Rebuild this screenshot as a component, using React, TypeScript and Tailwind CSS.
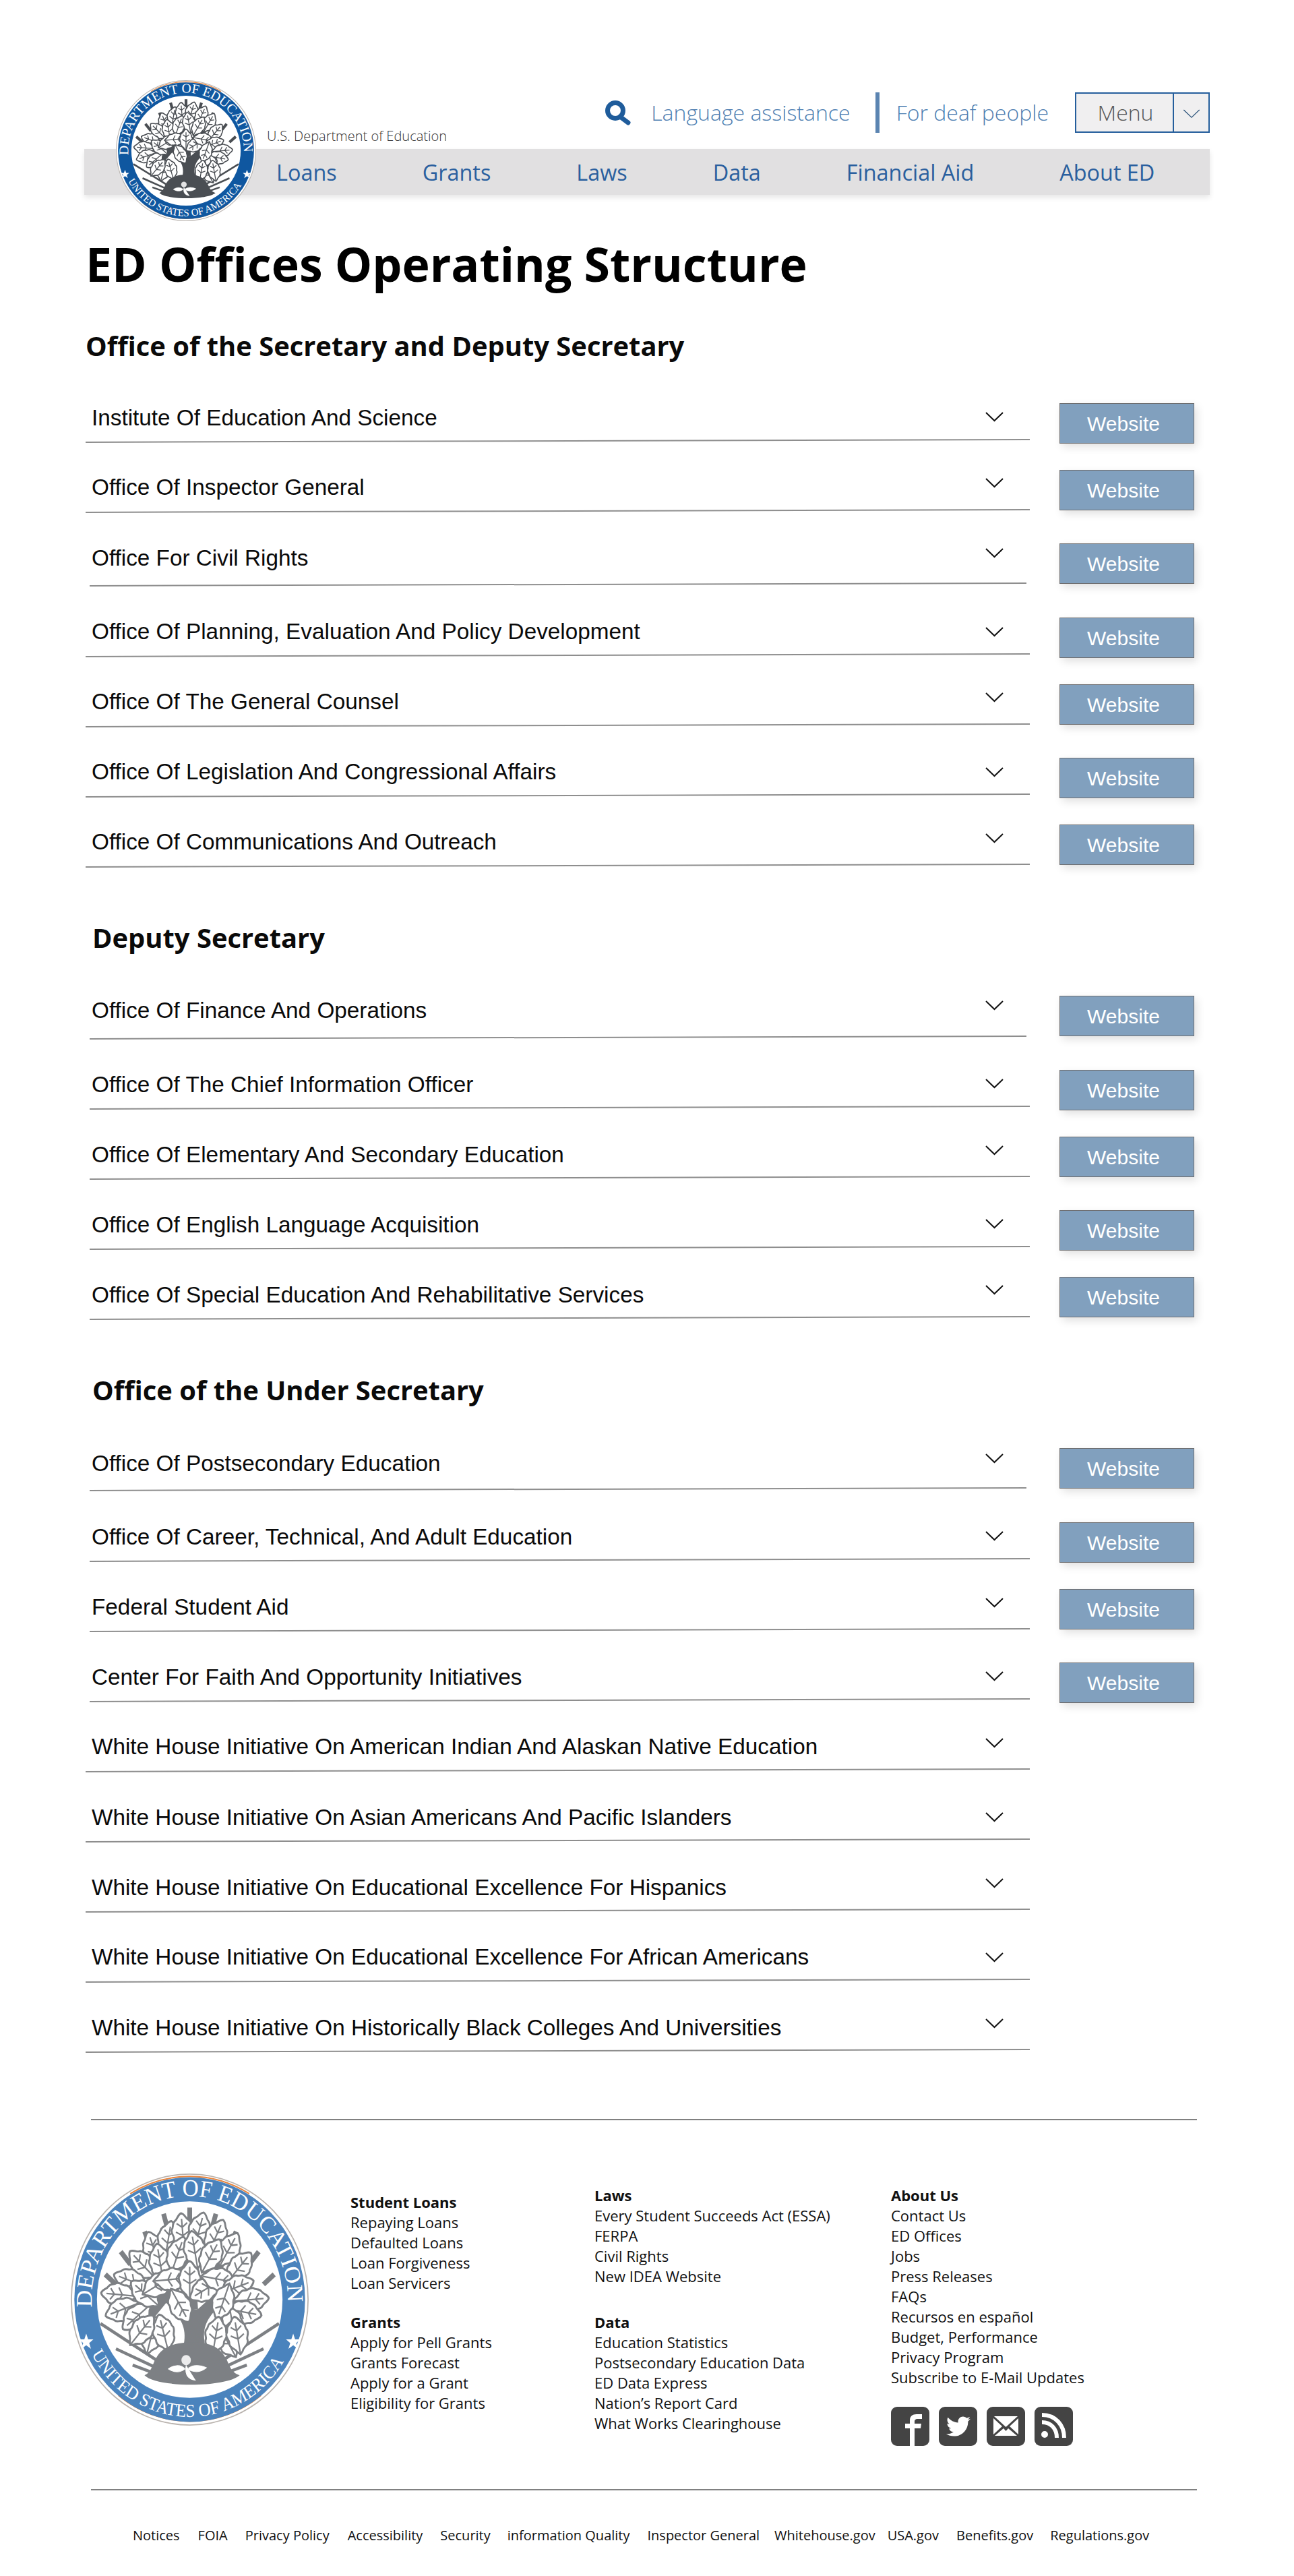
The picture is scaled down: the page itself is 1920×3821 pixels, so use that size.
import { FaTwitter } from "react-icons/fa";

const chevOffset: Record<number, string> = {
  32: "mb-[24px]",
  33: "mb-[25px]",
  38: "mb-[30px]",
  39: "mb-[31px]",
  43: "mb-[35px]",
  44: "mb-[36px]",
  45: "mb-[37px]",
};

const textOffset: Record<number, string> = {
  33: "mb-[13px]",
  34: "mb-[14px]",
  37: "mb-[17px]",
  38: "mb-[18px]",
  39: "mb-[19px]",
};

const btnOffset: Record<number, string> = {
  0: "mb-px",
  1: "mb-0",
  6: "-mb-[5px]",
};

const rowHeight: Record<number, string> = {
  104: "h-[104px]",
  105: "h-[105px]",
  109: "h-[109px]",
  112: "h-[112px]",
  118: "h-[118px]",
  119: "h-[119px]",
};

type Row = {
  name: string;
  h: number;
  text: number;
  chev: number;
  btn?: number;
  inset?: boolean;
  short?: boolean;
};

const secretary: Row[] = [
  { name: "Institute Of Education And Science", h: 112, text: 33, chev: 33, btn: 6 },
  { name: "Office Of Inspector General", h: 104, text: 34, chev: 39, btn: 1 },
  { name: "Office For Civil Rights", h: 109, text: 38, chev: 44, btn: 1, inset: true, short: true },
  { name: "Office Of Planning, Evaluation And Policy Development", h: 105, text: 34, chev: 32, btn: 6 },
  { name: "Office Of The General Counsel", h: 104, text: 34, chev: 39, btn: 1 },
  { name: "Office Of Legislation And Congressional Affairs", h: 104, text: 34, chev: 32, btn: 6 },
  { name: "Office Of Communications And Outreach", h: 104, text: 34, chev: 38, btn: 1 },
];

const deputy: Row[] = [
  { name: "Office Of Finance And Operations", h: 119, text: 39, chev: 45, btn: 0, inset: true, short: true },
  { name: "Office Of The Chief Information Officer", h: 104, text: 33, chev: 33, btn: 6, inset: true },
  { name: "Office Of Elementary And Secondary Education", h: 104, text: 33, chev: 38, btn: 1, inset: true },
  { name: "Office Of English Language Acquisition", h: 104, text: 33, chev: 33, btn: 6, inset: true },
  { name: "Office Of Special Education And Rehabilitative Services", h: 104, text: 33, chev: 39, btn: 1, inset: true },
];

const under: Row[] = [
  { name: "Office Of Postsecondary Education", h: 118, text: 37, chev: 43, btn: 1, inset: true, short: true },
  { name: "Office Of Career, Technical, And Adult Education", h: 105, text: 33, chev: 33, btn: 6, inset: true },
  { name: "Federal Student Aid", h: 104, text: 33, chev: 38, btn: 1, inset: true },
  { name: "Center For Faith And Opportunity Initiatives", h: 104, text: 33, chev: 33, btn: 6, inset: true },
  { name: "White House Initiative On American Indian And Alaskan Native Education", h: 104, text: 34, chev: 38 },
  { name: "White House Initiative On Asian Americans And Pacific Islanders", h: 104, text: 33, chev: 32 },
  { name: "White House Initiative On Educational Excellence For Hispanics", h: 104, text: 33, chev: 38 },
  { name: "White House Initiative On Educational Excellence For African Americans", h: 104, text: 34, chev: 32 },
  { name: "White House Initiative On Historically Black Colleges And Universities", h: 104, text: 33, chev: 38 },
];

const navItems = ["Loans", "Grants", "Laws", "Data", "Financial Aid", "About ED"];

const bottomLinks = [
  { label: "Notices", cls: "mr-[27px]" },
  { label: "FOIA", cls: "mr-[26px]" },
  { label: "Privacy Policy", cls: "mr-[27px]" },
  { label: "Accessibility", cls: "mr-[26px]" },
  { label: "Security", cls: "mr-[25px]" },
  { label: "information Quality", cls: "mr-[26px]" },
  { label: "Inspector General", cls: "mr-[22px]" },
  { label: "Whitehouse.gov", cls: "mr-[18px]" },
  { label: "USA.gov", cls: "mr-[26px]" },
  { label: "Benefits.gov", cls: "mr-[25px]" },
  { label: "Regulations.gov", cls: "" },
];

// leaf positions for the seal: x, y, rotation
const leaves: [number, number, number][] = [
  [70, 60, -20], [82, 52, 10], [94, 46, -5], [108, 45, 15], [122, 50, 25], [133, 60, 30],
  [60, 72, -45], [75, 70, -10], [90, 64, 20], [104, 60, -10], [118, 65, 30], [142, 74, 40],
  [50, 85, -70], [40, 96, -85], [43, 108, -110], [55, 114, -130], [62, 95, -50], [74, 88, 60], [85, 84, 85],
  [100, 84, 0], [113, 92, -120], [92, 105, 150],
  [125, 84, 100], [140, 90, 70], [152, 100, 85], [146, 110, 100], [136, 120, 170], [128, 102, -160],
  [68, 128, 15], [78, 126, -15], [60, 124, 40], [131, 132, -30], [122, 128, 10], [140, 128, -10],
];

const topRays = [
  [62, 46, 68, 60], [78, 32, 82, 46], [100, 27, 100, 40], [122, 32, 118, 46], [139, 46, 133, 60],
  [158, 62, 150, 72], [42, 62, 50, 72], [29, 80, 38, 88], [171, 80, 162, 88],
];

const lowRays = [
  [25, 119, 72, 148], [38, 139, 74, 155], [52, 152, 72, 159],
  [175, 119, 128, 148], [162, 139, 126, 155], [148, 152, 128, 159],
];

function Seal({ ring, tree, cls }: { ring: string; tree: string; cls: string }) {
  return (
    <svg viewBox="0 0 200 200" preserveAspectRatio="none" className={cls}>
      <defs>
        <path id="seal-top" d="M 17.8 106 A 82.4 82.4 0 1 1 182.2 106" />
        <path id="seal-bottom" d="M 17.5 143 A 93 93 0 0 0 182.5 143" />
      </defs>
      <circle cx="100" cy="100" r="99.5" fill="#fff" stroke="#b9b3ae" strokeWidth="1" />
      <path d="M 40 176 A 98 98 0 0 0 160 176" fill="none" stroke="#e8833a" strokeWidth="1" />
      <path d="M 50 16 A 98 98 0 0 1 150 16" fill="none" stroke="#e8833a" strokeWidth="1" />
      <circle cx="100" cy="100" r="97" fill={ring} />
      <circle cx="100" cy="100" r="78" fill="#fff" />
      <text fill="#fff" fontFamily="'Liberation Serif', serif" fontSize="19">
        <textPath href="#seal-top" textLength="266" lengthAdjust="spacingAndGlyphs">
          DEPARTMENT OF EDUCATION
        </textPath>
      </text>
      <text fill="#fff" fontFamily="'Liberation Serif', serif" fontSize="14.5">
        <textPath href="#seal-bottom" textLength="196" lengthAdjust="spacingAndGlyphs">
          UNITED STATES OF AMERICA
        </textPath>
      </text>
      <polygon points="13,127 14.6,131.5 19,131.5 15.5,134.5 17,139 13,136.2 9,139 10.5,134.5 7,131.5 11.4,131.5" fill="#fff" />
      <polygon points="187,127 188.6,131.5 193,131.5 189.5,134.5 191,139 187,136.2 183,139 184.5,134.5 181,131.5 185.4,131.5" fill="#fff" />
      {topRays.map(([a, b, c, d], i) => (
        <line key={i} x1={a} y1={b} x2={c} y2={d} stroke={tree} strokeWidth="4" />
      ))}
      {lowRays.map(([a, b, c, d], i) => (
        <line key={i} x1={a} y1={b} x2={c} y2={d} stroke={tree} strokeWidth="2.4" />
      ))}
      <path d="M103 140 L103 112 M103 118 L70 88 M103 116 L134 90 M103 108 L100 66 M70 88 L45 98 M134 90 L150 104 M88 96 L76 62 M116 100 L128 62 M84 92 L60 120 M122 98 L136 128" stroke={tree} strokeWidth="8" fill="none" />
      <path d="M94 140 C98 126 95 118 86 108 L122 108 C112 118 110 126 114 140 Z" fill={tree} />
      {leaves.map(([x, y, r], i) => (
        <g key={i} transform={`translate(${x} ${y}) rotate(${r}) scale(1.12)`}>
          <path
            d="M0 -13 C3 -12 3 -9 5 -8 C8 -6 6 -4 8 -2 C9 1 6 3 7 5 C7 9 3 9 2 12 L0 14 L-2 12 C-3 9 -7 9 -7 5 C-6 3 -9 1 -8 -2 C-6 -4 -8 -6 -5 -8 C-3 -9 -3 -12 0 -13 Z"
            fill="#fff"
            stroke={tree}
            strokeWidth="1.4"
          />
          <path d="M0 -9 L0 13 M0 -3 L-4 -6 M0 -3 L4 -6 M0 3 L-5 0 M0 3 L5 0" stroke={tree} strokeWidth="1.1" fill="none" />
        </g>
      ))}
      <path d="M62 160 C68 158 69 150 72 146 C78 136 90 134 102 134 C114 134 124 136 130 146 C133 150 134 158 142 160 C130 170 72 170 62 160 Z" fill={tree} />
      <circle cx="97" cy="148" r="4" fill="#fff" opacity="0.85" />
      <path d="M97 152 C96 158 97 163 105 164 M96 155 C92 151 86 152 82 155 C87 158 92 158 96 155 Z M98 155 C103 151 109 152 114 154 C109 158 103 158 98 155 Z" fill="#fff" stroke="#fff" strokeWidth="0.6" />
    </svg>
  );
}

function SearchIcon() {
  return (
    <svg viewBox="0 0 39 37" className="h-[37px] w-[39px]">
      <circle cx="15" cy="15" r="11.5" fill="none" stroke="#1f5c9b" strokeWidth="7" />
      <line x1="22" y1="24" x2="34" y2="33" stroke="#1f5c9b" strokeWidth="7" strokeLinecap="round" />
    </svg>
  );
}

function Chevron({ cls, color = "#111", weight = 2 }: { cls: string; color?: string; weight?: number }) {
  return (
    <svg viewBox="0 0 27 15" fill="none" className={cls}>
      <path d="M1 1 L13.5 13 L26 1" stroke={color} strokeWidth={weight} />
    </svg>
  );
}

function OfficeRow({ row }: { row: Row }) {
  return (
    <div className={`flex items-end ${rowHeight[row.h]}`}>
      <div className="flex h-full w-[1401px] shrink-0 flex-col">
        <div className="flex flex-1 items-end justify-between">
          <span className={`pl-[9px] text-[33.3px] leading-[36px] text-[#0a0a0a] ${textOffset[row.text]}`}>{row.name}</span>
          <Chevron cls={`mr-[39px] h-[15px] w-[27px] ${chevOffset[row.chev]}`} />
        </div>
        <div
          className={`h-[2px] origin-right -rotate-[0.16deg] bg-[#8e8e8e] ${row.inset ? "ml-[6px]" : ""} ${row.short ? "mr-[5px]" : ""}`}
        />
      </div>
      {row.btn !== undefined && (
        <a
          className={`ml-[44px] flex h-[60px] w-[200px] shrink-0 items-center justify-center border border-[#6e6e70] bg-[#81a0be] pr-[10px] text-[30px] text-white shadow-[4px_5px_12px_rgba(0,0,0,0.12)] ${btnOffset[row.btn]}`}
        >
          Website
        </a>
      )}
    </div>
  );
}

function Section({ title, rows, first }: { title: string; rows: Row[]; first?: boolean }) {
  return (
    <section>
      <h2 className={`h-[56px] text-[39.9px] font-bold leading-[56px] text-[#0a0a0a] font-['Open_Sans',sans-serif] ${first ? "mt-[46px]" : "mt-[80px] pl-[10px]"}`}>
        {title}
      </h2>
      {rows.map((r) => (
        <OfficeRow key={r.name} row={r} />
      ))}
    </section>
  );
}

function LinkColumn({ title, links, cls }: { title: string; links: string[]; cls?: string }) {
  return (
    <div className={cls}>
      <div className="font-bold">{title}</div>
      {links.map((l) => (
        <div key={l}>{l}</div>
      ))}
    </div>
  );
}

function SocialBox({ children }: { children: React.ReactNode }) {
  return <div className="flex h-[58px] w-[57px] items-center justify-center overflow-hidden rounded-[9px] bg-[#444444]">{children}</div>;
}

export default function App() {
  return (
    <div className="relative h-[3821px] w-[1920px] overflow-hidden bg-white font-['Liberation_Sans',sans-serif]">
      <header className="relative px-[125px] pt-[137px] font-['Open_Sans',sans-serif]">
        <Seal ring="#0f57a0" tree="#4a4e53" cls="absolute left-[172px] top-[119px] z-10 h-[209px] w-[208px]" />
        <div className="flex h-[60px] justify-between">
          <span className="-mb-[17px] ml-[271px] self-end text-[20px] font-light leading-[24px] text-[#333]">U.S. Department of Education</span>
          <div className="flex h-full items-center">
            <SearchIcon />
            <span className="ml-[29px] text-[32px] font-light leading-[44px] text-[#4f7fb2]">Language assistance</span>
            <span className="ml-[37px] h-full w-[6px] bg-[#5b84b1]" />
            <span className="ml-[25px] text-[32px] font-light leading-[44px] text-[#4f7fb2]">For deaf people</span>
            <div className="ml-[39px] flex h-full w-[200px] border-2 border-[#255e9c] bg-[#f0eff0]">
              <span className="flex w-[145px] items-center justify-center border-r-2 border-[#255e9c] pl-[3px] text-[32px] font-light text-[#555]">Menu</span>
              <span className="flex flex-1 items-center justify-center">
                <Chevron cls="mt-[4px] h-[14px] w-[28px]" color="#33597f" weight={1.5} />
              </span>
            </div>
          </div>
        </div>
        <nav className="mt-[24px] flex h-[68px] items-center gap-[127px] bg-[#e1e0e1] pl-[285px] text-[32.4px] text-[#2a5f9e] shadow-[0_4px_8px_rgba(0,0,0,0.1)]">
          {navItems.map((n) => (
            <span key={n}>{n}</span>
          ))}
        </nav>
      </header>

      <main className="pl-[127px]">
        <h1 className="mt-[54px] h-[96px] text-[69.8px] font-bold leading-[96px] text-black font-['Open_Sans',sans-serif]">
          ED Offices Operating Structure
        </h1>
        <Section first title="Office of the Secretary and Deputy Secretary" rows={secretary} />
        <Section title="Deputy Secretary" rows={deputy} />
        <Section title="Office of the Under Secretary" rows={under} />
      </main>

      <footer className="mt-[102px] font-['Open_Sans',sans-serif] text-[22px] leading-[30px] text-[#111]">
        <div className="ml-[135px] h-[2px] w-[1641px] bg-[#808080]" />
        <div className="ml-[105px] mt-[79px] flex">
          <Seal ring="#4a83bd" tree="#7d8084" cls="h-[374px] w-[353px] shrink-0" />
          <div className="ml-[62px] mt-[27px] w-[362px]">
            <LinkColumn title="Student Loans" links={["Repaying Loans", "Defaulted Loans", "Loan Forgiveness", "Loan Servicers"]} />
            <LinkColumn cls="mt-[28px]" title="Grants" links={["Apply for Pell Grants", "Grants Forecast", "Apply for a Grant", "Eligibility for Grants"]} />
          </div>
          <div className="mt-[17px] w-[440px]">
            <LinkColumn title="Laws" links={["Every Student Succeeds Act (ESSA)", "FERPA", "Civil Rights", "New IDEA Website"]} />
            <LinkColumn cls="mt-[38px]" title="Data" links={["Education Statistics", "Postsecondary Education Data", "ED Data Express", "Nation’s Report Card", "What Works Clearinghouse"]} />
          </div>
          <div className="mt-[17px]">
            <LinkColumn
              title="About Us"
              links={["Contact Us", "ED Offices", "Jobs", "Press Releases", "FAQs", "Recursos en español", "Budget, Performance", "Privacy Program", "Subscribe to E-Mail Updates"]}
            />
            <div className="mt-[29px] flex gap-[14px]">
              <SocialBox>
                <svg viewBox="0 0 57 58" className="h-[58px] w-[57px]">
                  <path d="M28 58 V32 H21 V25 H28 V20 C28 14 32 11 38 11 H46 V18 H40 C36 18 35 20 35 22 V25 H45 L44 32 H35 V58 Z" fill="#fff" />
                </svg>
              </SocialBox>
              <SocialBox>
                <FaTwitter className="h-[36px] w-[36px] text-white" />
              </SocialBox>
              <SocialBox>
                <svg viewBox="0 0 57 58" className="h-[58px] w-[57px]">
                  <path d="M11 14 H46 L28.5 30 Z M10 17 L23 29 L10 41 Z M47 17 V41 L34 29 Z M12 43 L25 32 L28.5 36 L32 32 L45 43 Z" fill="#fff" />
                </svg>
              </SocialBox>
              <SocialBox>
                <svg viewBox="0 0 57 58" className="h-[58px] w-[57px]">
                  <circle cx="15" cy="41" r="5" fill="#fff" />
                  <path d="M11 23 C24 23 33 32 33 46" fill="none" stroke="#fff" strokeWidth="6" />
                  <path d="M11 12 C31 12 44 27 44 46" fill="none" stroke="#fff" strokeWidth="6" />
                </svg>
              </SocialBox>
            </div>
          </div>
        </div>
        <div className="ml-[135px] mt-[64px] h-[2px] w-[1641px] bg-[#808080]" />
        <div className="ml-[197px] mt-[52px] flex text-[20px]">
          {bottomLinks.map((l) => (
            <span key={l.label} className={l.cls}>
              {l.label}
            </span>
          ))}
        </div>
      </footer>
    </div>
  );
}
